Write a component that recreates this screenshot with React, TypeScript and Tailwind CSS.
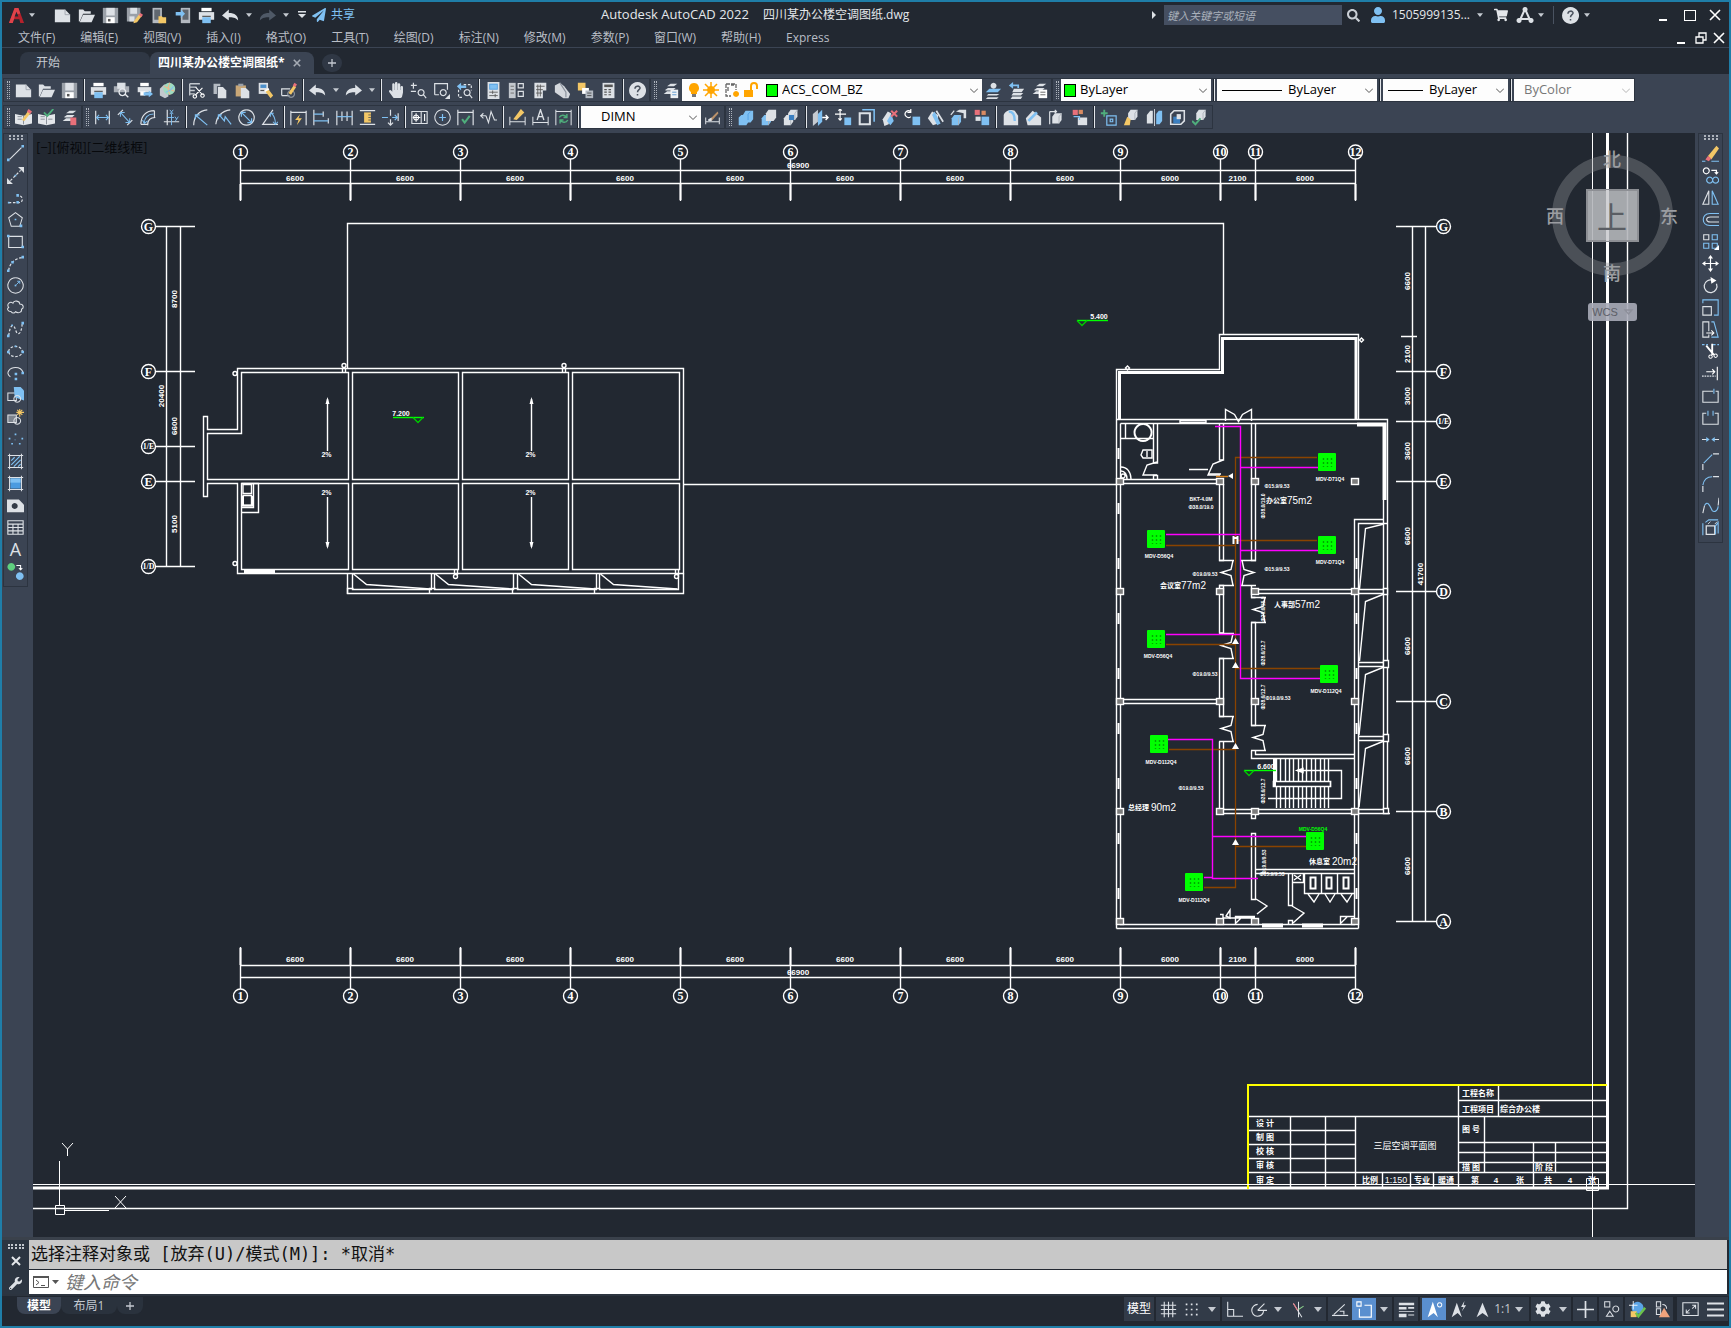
import React from 'react';
import { FaCog, FaHandPaper, FaPaperPlane, FaSearch, FaShoppingCart, FaUser, FaWrench } from 'react-icons/fa';

// Icon palette
const W = '#dde1e6';
const B = '#7fc0f2';
const Y = '#f3c766';
const R = '#e8707a';
const G = '#4fae7c';
const D = '#8b929c';

type Shape = { d: string; s?: string; f?: string; w?: number; dash?: string };

const line = (d: string, s: string = W, w: number = 1.4): Shape => ({ d, s, w });
const fill = (d: string, f: string = W): Shape => ({ d, f });
const dash = (d: string, s: string = W): Shape => ({ d, s, w: 1.4, dash: '3 2' });

const cube = (f: string = W, x = 4, y = 4): Shape[] => [
  fill(`M${x} ${y + 4}l3 -4h8v8l-3 4h-8z`, f),
  line(`M${x + 8} ${y + 12}v-8l3 -4`, '#aab0b8', 1),
];
const dimBar = (c: string = B) => [line('M2 2v16M18 2v16'), line('M3 10h14M6 7l-3 3l3 3M14 7l3 3l-3 3', c, 1.3)];
const layers = [fill('M6 5l4-3h8l-4 3z'), fill('M4 9l3-2h9l-3 3H4z'), fill('M2 14l4-3h9l-4 3z')];

const icons: Record<string, Shape[]> = {
  new: [fill('M1 3h12l6 6v9H1z'), line('M13 3v6h6', '#9ba1aa', 1)],
  open: [fill('M1 17V3h5l2 2h7v3H6L2 17z'), fill('M6 9h14l-4 9H2z')],
  save: [fill('M1 1h18v18H1z', '#9aa0a8'), fill('M5 1h10v9H5z'), fill('M5 12h10v7H5z', '#fff'), fill('M7 14h3v3H7z', '#555')],
  saveas: [fill('M1 1h16v10l-5 6H1z', '#9aa0a8'), fill('M5 1h8v7H5z'), fill('M4 11h6v6H4z'), fill('M9 17l7-9l3 2l-6 8l-4 1z', Y), fill('M15 9l2-2l3 2l-2 3z', R)],
  phoneOpen: [fill('M3 1h11v18H3z', '#b4b9c0'), fill('M5 3h7v12H5z', '#60676f'), fill('M10 11h4l1 1h4v7h-9z', Y)],
  phoneSave: [fill('M8 1h11v18H8z', '#b4b9c0'), fill('M10 3h7v12h-7z', '#60676f'), fill('M2 6h6v-3l5 5l-5 5v-3H2z', B)],
  print: [fill('M4 1h12v4H4z', '#fff'), fill('M1 6h18v9H1z'), fill('M5 12h10v7H5z', B), line('M5 11h10', '#555')],
  undo: [fill('M0 10l8-7v4c7 0 11 3 11 9c-3-4-7-4-11-4v4z')],
  redo: [fill('M20 10l-8-7v4c-7 0-11 3-11 9c3-4 7-4 11-4v4z')],
  redoOff: [fill('M20 10l-8-7v4c-7 0-11 3-11 9c3-4 7-4 11-4v4z', '#4f5967')],
  preview: [fill('M5 1h10v4h4v7H1V5h4z', '#a9aeb6'), fill('M5 1h9v7H5z'), line('M11 8a4 4 0 1 0 .1 0M14 14l4 4', '#e8ebef', 1.6)],
  publish: [fill('M5 1h10v4H5z', '#fff'), fill('M2 6h16v6H2z'), fill('M5 11h6v5H5z', '#fff'), fill('M9 12h6v-2l5 4l-5 4v-2H9z', B)],
  globe: [fill('M1 8l5-5h5v14l-4 2l-6-3z', '#c3c8ce'), fill('M12 1a7 7 0 1 0 .1 0z', '#9fdcc0'), line('M6 5c4 2 8 4 12 6M13 1c-3 4-3 10 0 14', '#f0b58a', 1.3), line('M8 12c3-1 7-3 9-7', B, 1.2)],
  cut: [line('M2 2h12M2 6h8M2 10h6M2 14h6M2 2v14', '#c3c8ce', 1.6), line('M9 6l8 9M17 7l-8 8M8 15a2 2 0 1 0 .1 0M17 14a2 2 0 1 0 .1 0', '#fff', 1.3)],
  copy: [fill('M3 2h8v3H7v9H3z', '#b4bac2'), fill('M8 6h6l4 4v9H8z')],
  paste: [fill('M2 4h12v13H2z', '#c9a777'), fill('M5 2h6v3H5z', '#9aa0a8'), fill('M8 7h6l4 4v8H8z')],
  match: [fill('M2 1h11v13H2z'), fill('M4 3h7v4H4z', '#4b8fcb'), line('M4 10h5', '#555'), fill('M9 10l4-2l6 8l-3 3z', Y), line('M9 11l5-3', '#fff', 2)],
  block: [line('M2 16V8h10M2 16h9'), line('M13 10a4 4 0 1 0 .1 0', D), fill('M10 13l6-9l3 2l-6 9z', Y), fill('M15 4l2-3l3 2l-2 3z', R)],
  zoomRt: [line('M4 1v7M1 4h7M1 11h6'), line('M13 9a3.500 3.500 0 1 0 .1 0M16 15l3 4')],
  zoomWin: [line('M2 15V2h15v7M2 15h5'), line('M12 9a3.500 3.500 0 1 0 .1 0'), fill('M20 14v6h-6z')],
  zoomPrev: [dash('M3 9v9h6M9 3h9v7'), fill('M1 5l5-4v3h6v3H6v3z', B), line('M13 9a3.500 3.500 0 1 0 .1 0M16 15l3 4')],
  props: [fill('M3 0h14v20H3z'), fill('M5 2h10v7H5z', '#4b9be0'), fill('M6 3h8v5H6z', B), line('M5 12h10M5 16h10M9 10v4M12 14v4', '#555', 1)],
  design: [fill('M1 1h8v18H1z', '#c3c8ce'), line('M3 5h4M3 9h4M3 13h4', '#666', 1), line('M12 2h6v5h-6zM12 11h6v6h-6z')],
  tools: [fill('M4 1h14v9h-4v9H4z'), line('M8 3v14M11 3v14M6 5h10M6 9h8M6 13h7', '#555', 1)],
  sheets: [fill('M1 4l6-3l5 4l7 9l-2 5h-6L1 12z', '#d4d8dd'), line('M7 1l7 11v6', '#8b929c')],
  markup: [fill('M1 1h9v6l-4 3H1z', Y), fill('M6 7h8v7H6z', '#fff'), fill('M10 10h9v9h-9z', '#b4bac2'), line('M12 13h5M12 16h5', '#444', 1)],
  calc: [fill('M3 1h14v18H3z'), fill('M5 3h10v3H5z', '#555'), dash('M5 9h10M5 12h10M5 15h10', '#555')],
  help: [fill('M10 0a10 10 0 1 0 .1 0z'), line('M7 8c0-4 6-4 6-1c0 2-3 2-3 5M10 14v2', '#4b535f', 1.8)],
  layerProp: [...layers, fill('M10 9h9v10h-9z', '#eef1f4'), line('M12 12h5M12 15h5', '#4b8fcb', 1)],
  layerCur: [fill('M5 8h14l-4 4H1z', B), fill('M4 14h13l-3 2H2z'), fill('M3 18h13l-2 2H1z'), fill('M10 1a3.500 3.500 0 1 0 .1 0z')],
  layerPrev: [fill('M7 8h12l-3 4H5z'), fill('M6 13h12l-3 3H4z'), fill('M5 17h12l-2 3H3z'), fill('M1 4l5-4v3h7v4h-2V5H6v3z', B)],
  layerState: [...layers, fill('M9 9h10v10H9z', '#fff'), line('M11 12h6M11 15h6', '#555', 1)],
  bookEdit: [fill('M0 6l10 2l10-2v11l-10 2l-10-2z', '#e3e6ea'), line('M3 9h5M3 12h5M10 8v10', '#7c838d', 1), fill('M8 13l7-10l3 2l-7 9z', Y), fill('M14 3l2-3l4 3l-2 3z', R)],
  bookCheck: [fill('M0 6l10 2l10-2v11l-10 2l-10-2z', '#e3e6ea'), line('M3 9h5M3 12h5M10 8v10M12 12h5', '#7c838d', 1), line('M7 4l4 4l7-8', G, 2.2)],
  layerRed: [...layers, fill('M11 10h7v9h-7z', R)],
  dimLin: dimBar(),
  dimAl: [line('M1 7l6-6M12 19l6-6'), line('M4 4l11 12M4 9V4h5M15 11v5h-5', B, 1.2)],
  dimArc: [line('M1 18c0-10 6-16 16-16M9 19c0-6 3-9 9-9M1 18h8M17 2v8'), line('M5 17c0-7 4-11 11-11M3 13l2 4l4-3', B, 1.2)],
  dimOrd: [line('M5 1v18M1 15h18'), line('M10 5v14M5 10h8M8 1l4 5M12 1l-4 5M14 9l2 3M18 9l-4 6', B, 1.1)],
  dimRad: [line('M2 19C2 9 8 2 18 1'), line('M4 7l14 12M4 12V7h5', B)],
  dimJog: [line('M1 18C2 9 8 2 18 1'), line('M5 7l6 7l1-5l7 9M4 12V7h4', B)],
  dimDia: [line('M10 1a9 9 0 1 0 .1 0'), line('M4 4l12 12M4 9V4h5M16 11v5h-5', B)],
  dimAng: [line('M14 1L2 18h18'), line('M12 5c4 3 5 8 5 13M11 9V5h4M14 15l3 3l3-3', B, 1.2)],
  dimQuick: [line('M1 2v17M19 2v17M1 4h18'), fill('M12 6l-6 7h4l-2 6l6-8h-4z', Y)],
  dimBase: [line('M1 1v18M12 3v6M18 11v6'), line('M1 6h11M1 14h17', B)],
  dimCont: [line('M1 2v17M7 3v11M13 3v11M19 2v17'), line('M1 9h18', B)],
  dimSpace: [line('M1 2h18M1 18h18'), fill('M6 4h8v12H6z', Y), line('M11 7h3M11 10h3M11 13h3', '#555', 1)],
  dimBreak: [line('M10 1v7M10 12v7M7 16l3 3l3-3M19 5v9'), line('M0 10h7M12 10h6M15 7l3 3l-3 3', B)],
  tol: [line('M1 3h18v14H1zM12 3v14', W, 1.3), line('M6 5v10M2 10h9M6 7a3 3 0 1 0 .1 0M16 6v8', '#fff', 1.3)],
  center: [line('M10 1a9 9 0 1 0 .1 0', W, 1.2), line('M10 6v8M6 10h8', B)],
  inspect: [line('M1 1v18M19 1v18M1 4h18'), line('M6 12l3 4l6-8', G, 2.4)],
  jogLine: [line('M0 8h7M4 5l-3 3l3 3M7 8l3 8l3-13l4 10h3', W, 1.3)],
  dimEdit: [line('M1 9v10M19 9v10M1 15h18', W, 1.2), fill('M5 12l9-12l4 4l-9 9z', Y)],
  dimText: [line('M1 9v10M19 9v10M1 16h18', W, 1.2), line('M6 13l4-12l4 12M8 9h5', W, 1.6)],
  dimUpd: [line('M1 1v18M19 1v18M1 3h18', W, 1.2), line('M5 10c2-4 7-3 9 0M14 6v4h-4M15 13c-2 4-7 3-9 0M6 17v-4h4', G, 1.7)],
  dimStyle: [line('M2 10v8M18 10v8M2 15h16', W, 1.2), fill('M7 12l9-9l1 2l-8 9z', '#b9916a'), fill('M5 12l4-2v4H5z', W)],
  union: [fill('M2 10l3-3h2l3-5h9v10l-3 4h-3l-2 3H2z', B), line('M13 13V6l3-3', '#4b9be0', 1)],
  subtract: [...cube(B, 2, 7), fill('M7 5l3-4h9v9l-3 4H7z', '#dde1e6')],
  intersect: [...cube(W, 6, 1), ...cube(W, 1, 7), fill('M7 7h6v6H7z', '#3b7fc0')],
  extrude: [fill('M1 6l6-5v14l-6 5z', '#c6cbd1'), fill('M7 6l5-5v14l-5 5z', B), line('M12 10h7M16 7l3 3l-3 3', '#fff', 1.6)],
  moveF: [line('M6 0v13M0 6h13M4 2l2-2l2 2M4 11l2 2l2-2', '#fff'), fill('M11 10h8v9h-8z', B)],
  offsetF: [line('M2 5h12v13H2z', W, 2.4), line('M5 1h14v14', B, 1.800)],
  deleteF: [fill('M2 12l6-9l4 2l-3 13l-5 2z'), fill('M7 14l5-8l3 8l-4 5z', B), line('M12 2l7 7M19 2l-7 7', R, 2.4)],
  rotateF: [line('M8 9a4 4 0 1 1 0-6M8 0v4H4', '#fff'), fill('M10 9h9v10h-9z', B)],
  taperF: [fill('M1 11l5-8l7 4v10l-6 2z', W), fill('M9 3l7 14l-4 2l-6-12z', B), line('M11 2l8 13', W, 2)],
  copyF: [...cube(B, 2, 7), fill('M7 3l4-2h8v10h-3V5z'), line('M1 7l4-5', W)],
  colorF: [fill('M2 1h6v6H2z', R), fill('M10 2h5v5h-5z', '#d98b62'), fill('M3 9h6v5H3z'), fill('M10 9h9v10h-9z', B)],
  filletE: [fill('M2 7c2-6 9-7 13-5l4 6v11H2z'), line('M8 3c6 0 7 5 7 11', B, 2.8)],
  chamferE: [fill('M1 11l8-9l10 8v9H3z'), line('M4 14l10-10', B, 3.2)],
  colorE: [...cube(W, 5, 5), line('M2 3v15M2 3h8M8 1l2 2l-2 2', W)],
  copyE: [fill('M2 1h6v6H2z', R), fill('M9 1h5v5H9z', '#d98b62'), fill('M8 10h11v9H8z'), line('M3 9h7v4', B)],
  imprint: [line('M5 1v8M1 5h8', G, 2.2), line('M8 8h11v11H8zM12 12h3v3h-3z', B)],
  clean: [...cube(W, 6, 1), fill('M1 19l4-10l4 3l-1 7z', Y)],
  separate: [fill('M1 7l4-5h3v15H1z'), line('M10 0v20', W, 1), fill('M12 6l3-4h4v12l-3 4h-4z', B)],
  shell: [line('M2 6l4-4h12v12l-4 4H2z', W, 1.8), fill('M5 9h8v8H5z', '#3b7fc0'), fill('M9 6h5v6H9z', W)],
  check: [...cube(W, 5, 1), line('M0 14l4 4l6-7', G, 2.4)],
  // draw toolbar
  line: [line('M3 17L17 3', W, 1.3), fill('M0 16h3v3H0zM17 0h3v3h-3z', B)],
  xline: [{ ...line('M4 16L16 4', W, 1.4), dash: '3 2' }, fill('M0 20v-7l7 7zM20 0v7l-7-7z'), fill('M9 9h2v2H9z', B)],
  pline: [dash('M2 16h12c6 0 5-9-1-8'), fill('M1 15h2v2H1zM11 14h3v3h-3zM11 6h3v3h-3z', B)],
  polygon: [line('M10 2l8 6l-3 10H5L2 8z', W, 1.2), fill('M9 9h2v2H9zM15 16h3v3h-3z', B)],
  rect: [line('M2 4h16v13H2z', W, 1.3), fill('M0 2h3v3H0zM17 15h3v3h-3z', B)],
  arc: [dash('M2 18c1-8 7-14 16-15'), fill('M0 17h3v3H0zM5 7h3v3H5zM17 1h3v3h-3z', B)],
  circle: [line('M10 1a9 9 0 1 0 .1 0', W, 1.2), line('M11 9l4-4M12 5h3v3', B, 1.1), fill('M9 9h2v2H9z', B)],
  cloud: [line('M5 15c-5 0-5-4-3-5c-3-4 2-8 5-5c1-4 8-3 8 1c5 0 5 5 2 6c1 4-4 5-7 3c-1 2-4 2-5 0z', W, 1.2)],
  spline: [dash('M2 17C4 2 8 4 10 10c2 8 7 7 8-8'), fill('M0 16h3v3H0zM17 1h3v3h-3zM5 4h2v2H5z', B)],
  ellipse: [dash('M2 10a8 6 0 1 1 16 0a8 6 0 1 1-16 0'), fill('M0 9h3v3H0zM17 9h3v3h-3zM9 3h2v2H9z', B)],
  ellArc: [line('M4 14c-7-5 0-11 6-11c5 0 8 3 9 6', W, 1.2), fill('M9 9h3v3H9zM17 8h3v3h-3zM9 15h3v3H9z', B)],
  insert: [line('M1 7h10v9H1z', W, 1.2), fill('M8 0h8l4 4v12l-11-4z', B), line('M12 10a4 4 0 1 0 .1 0', W, 1.2)],
  mkblock: [fill('M1 7h10v9H1z', '#7d848e'), line('M1 7h10v9H1z', W, 1.2), line('M12 10a4 4 0 1 0 .1 0', W, 1.2), line('M15 0v9M11 4h9M12 1l6 6M18 1l-6 6', Y, 1.3)],
  point: [fill('M9 3h2v2H9zM2 8h2v2H2zM17 8h2v2h-2zM5 14h2v2H5zM14 14h2v2h-2zM9 10h1v1H9z', B)],
  hatch: [line('M3 1v18M17 1v18M1 3h18M1 17h18', W, 1.2), line('M5 9l4-4M5 14l10-10M8 16l8-8M13 16l3-3', B, 1.4)],
  grad: [fill('M4 4h12v12H4z', '#4b9be0'), fill('M4 4h12v5H4z', B), line('M3 1v18M17 1v18M1 3h18M1 17h18', W, 1.2)],
  region: [fill('M0 3h14l6 6v9H0z'), fill('M9 7a3.500 3.500 0 1 0 .1 0z', '#333b47')],
  table: [line('M1 2h18v16H1zM1 6h18M1 10h18M1 14h18M7 6v12M13 6v12', W, 1.3)],
  addsel: [fill('M5 0a4.500 4.500 0 1 0 .1 0z', '#5fd07f'), fill('M15 11a4.500 4.500 0 1 0 .1 0z', B), line('M11 3h5v5M14 6l2 2l2-2', '#fff', 1.2)],
  // modify toolbar
  erase: [fill('M7 13L17 1l3 3L11 17z', Y), fill('M7 13l4 3l-3 3l-4-2z', R), line('M0 19h4M11 19h9', B, 1.2)],
  mcopy: [line('M5 1a3.500 3.500 0 1 0 .1 0M11 4h6v4M15 6l2 2l2-2', '#fff'), line('M9 12a3.500 3.500 0 1 0 .1 0M16 12a3.500 3.500 0 1 0 .1 0', B)],
  mirror: [line('M8 2v16H1z', W, 1.3), line('M12 2v16h7z', B, 1.3)],
  offset: [line('M20 3H9c-10 0-10 14 0 14h11', B, 1.3), line('M20 7H10c-6 0-6 6 0 6h10', W, 1.3)],
  array: [line('M2 2h6v6H2z', W, 1.3), line('M12 2h6v6h-6zM2 12h6v6H2zM12 12h6v6h-6z', B, 1.3), fill('M20 14v6h-6z', '#fff')],
  move: [line('M10 2v16M2 10h16', '#fff'), fill('M10 0l3 4H7zM10 20l3-4H7zM0 10l4-3v6zM20 10l-4-3v6z', '#fff')],
  rotate: [line('M13 4a7.500 7.500 0 1 0 4 4', W, 1.5), fill('M10 0l7 4l-6 4z', '#fff')],
  scale: [line('M1 9h10v10H1z', W, 1.3), line('M1 5V1h18v18h-5', B, 1.3)],
  stretch: [line('M8 12V1H1v18h7v-3', W, 1.3), line('M11 1h3l5 18h-8', B, 1.3), line('M5 14h8M11 11l3 3l-3 3', '#fff', 1.2)],
  trim: [dash('M0 2h7M13 2h7', B), line('M5 3l9 11M12 1v13', '#fff', 2.2), line('M10 14a2 2 0 1 0 .1 0M16 13a2 2 0 1 0 .1 0', '#fff', 1.2)],
  extend: [line('M18 2v16', '#fff', 1.3), line('M5 8h10M12 5l3 3l-3 3', '#fff', 1.3), { ...line('M0 13h16', W), dash: '2 1' }],
  breakPt: [line('M13 5H1v13h18V5h-3', W, 1.3), line('M14 2v6', B, 1.3)],
  breakT: [line('M5 5H1v13h18V5h-4', W, 1.3), line('M7 2v6M13 2v6', B, 1.3)],
  join: [line('M0 10h7M13 10h7', W), fill('M9 10l-4-3v6zM11 10l4-3v6z', B)],
  chamfer: [line('M1 20v-7M13 1h7', W, 1.4), line('M2 12L12 2', B, 1.3)],
  fillet: [line('M1 20v-7M13 2h7', W, 1.4), line('M1 12C2 6 6 2 12 2', B, 1.3)],
  blend: [line('M1 19l2-9M20 1l-1 9', W, 1.3), line('M3 10c4-7 7 2 9 6c3 3 7-1 7-5', B, 1.3)],
  explode: [line('M5 8h10v10H5z', W, 1.5), line('M1 5v14M4 4l4-3h11M19 17V4l-3 4v10', B, 1.3), line('M7 6l3-3M15 6l3-3', W, 1)],
  // status bar
  grid: [line('M5 1v18M10 1v18M15 1v18M1 5h18M1 10h18M1 15h18', W, 1.3)],
  dots: [fill('M2 3h2v2H2zM8 3h2v2H8zM14 3h2v2h-2zM2 9h2v2H2zM8 9h2v2H8zM14 9h2v2h-2zM2 15h2v2H2zM8 15h2v2H8zM14 15h2v2h-2z')],
  ortho: [line('M2 1v17h18M2 10h7v8', W, 1.3)],
  polar: [line('M9 4a7 7 0 1 0 7 8M9 11L17 3M9 11h11', W, 1.3)],
  iso: [line('M4 3l10 16M10 1v18', W, 1.2), line('M4 3l5 8', R, 1.2), line('M10 10l6-4', '#8bd08b', 1.2)],
  otrack: [line('M0 17h19', W), line('M2 16L15 4M9 12h5v4', W, 1.3)],
  osnap: [line('M4 9v10h14V5H10', '#fff', 1.4), line('M1 1h5v5H1z', '#fff', 1.3)],
  lwt: [fill('M1 2h18v3H1zM1 7h9v3H1zM12 7h7v2h-7zM1 12h18v1H1zM1 15h9v4H1zM12 16h7v1h-7z')],
  annoVis: [fill('M8 1l6 18l-5-5l-7 5z', '#fff'), line('M16 2a2.500 2.500 0 1 0 .1 0', '#fff', 1.2)],
  annoAuto: [fill('M8 2l6 17l-5-5l-7 5z'), fill('M17 0l-4 7h3l-2 5l5-7h-3z')],
  anno: [fill('M10 2l7 17l-7-5l-7 5z')],
  plus: [line('M10 0v20M0 10h20', W, 2)],
  shapes: [line('M2 1h6v6H2zM15 6a3.500 3.500 0 1 0 .1 0M8 12l4 6H4z', W, 1.2)],
  hw: [fill('M10 1a7 7 0 1 0 .1 0z', '#5aa4e6'), fill('M2 12h7v7H2z', Y), line('M8 14l3 4l8-10', '#6cc24a', 2.8), line('M5 0v10M0 5h10', '#fff', 1)],
  isolate: [line('M4 1h5v6H4zM4 9h5v7H4zM11 4c4 0 5 2 5 5', W, 1.2), fill('M13 8l7 11H7z', '#f0a37c')],
  full: [line('M1 2h18v15H1z', W, 1.3), line('M12 5h4v4M5 10v4h4M16 5l-4 4M5 14l4-4', W, 1.2)],
  menu: [line('M0 3h20M0 10h20M0 17h20', W, 2.4)],
};

const Icon: React.FC<{ name: string; size?: string }> = ({ name, size = 'h-[17px] w-[17px]' }) => (
  <svg viewBox="0 0 20 20" className={`${size} shrink-0`} aria-hidden="true">
    {icons[name].map((p, i) => (
      <path key={i} d={p.d} fill={p.f ?? 'none'} stroke={p.s ?? 'none'} strokeWidth={p.w} strokeDasharray={p.dash} />
    ))}
  </svg>
);

const Tool: React.FC<{ name: string }> = ({ name }) => (
  <button aria-label={name} className="flex h-[22px] w-[23px] shrink-0 items-center justify-center hover:bg-[#4d586a]">
    <Icon name={name} />
  </button>
);

const Caret: React.FC<{ wide?: boolean }> = ({ wide }) => (
  <button aria-label="more" className={`flex h-[22px] shrink-0 items-center justify-center ${wide ? 'w-4' : 'w-[13px]'}`}>
    <svg viewBox="0 0 8 5" className={wide ? 'h-[5px] w-2' : 'h-1 w-[6px]'}><path d="M0 0h8l-4 5z" fill="#c5cad1" /></svg>
  </button>
);

const Sep = () => (
  <div className="flex h-[22px] w-[6px] shrink-0 justify-center">
    <div className="w-px bg-[#1e252f]" />
    <div className="w-px bg-[#e3e6ea]" />
  </div>
);

const Grip = () => (
  <div className="flex h-[18px] w-2 shrink-0 justify-center gap-px">
    <div className="w-0 border-l border-dotted border-[#aeb4bd]" />
    <div className="w-0 border-l border-dotted border-[#aeb4bd]" />
  </div>
);

// A toolbar is a space separated list: "|" is a separator, "v" a drop-down caret
const Tools: React.FC<{ list: string }> = ({ list }) => (
  <>
    {list.split(' ').map((n, i) => {
      if (n === '|') return <Sep key={i} />;
      if (n === 'v') return <Caret key={i} />;
      if (n === 'pan') {
        return (
          <button key={i} aria-label="pan" className="flex h-[22px] w-[23px] items-center justify-center">
            <FaHandPaper className="h-4 w-4 text-[#dde1e6]" />
          </button>
        );
      }
      return <Tool key={i} name={n} />;
    })}
  </>
);

const Chevron: React.FC<{ light?: boolean }> = ({ light }) => (
  <svg viewBox="0 0 8 5" className="mr-1 h-[5px] w-2 shrink-0">
    <path d="M0 .5l4 4l4-4" fill="none" stroke={light ? '#b5b5b5' : '#555'} />
  </svg>
);

const Combo: React.FC<{ label: string; value: string; className: string; pad?: string; disabled?: boolean; children?: React.ReactNode }> = ({
  label, value, className, pad = 'pl-1', disabled, children,
}) => (
  <div className={`flex h-[22px] shrink-0 items-center bg-[#fdfdfd] ${className}`}>
    {children}
    <select
      aria-label={label}
      disabled={disabled}
      className={`h-full min-w-0 flex-1 appearance-none bg-transparent text-[13px] ${pad} ${disabled ? 'text-[#777]' : 'text-black'}`}
    >
      <option>{value}</option>
    </select>
    <Chevron light={disabled} />
  </div>
);

const group = 'flex items-center border border-[#2c3440]';

const quickAccess = ['new', 'open', 'save', 'saveas', 'phoneOpen', 'phoneSave', 'print', 'undo'];

const TitleBar = () => (
  <header className="flex h-[26px] items-center bg-[#222831] text-xs text-[#e4e7eb]">
    <div className="flex w-[591px] shrink-0 items-center pl-1">
      <button aria-label="Application menu" className="flex w-11 items-center pl-[2px]">
        <svg viewBox="0 0 18 18" className="h-[17px] w-[17px]">
          <path d="M7 1h4l6 16h-4l-1-4H6l-1 4H1z" fill="#b5222c" />
          <path d="M7 1h4l2 6l-5 1l-3 9H1z" fill="#e0434a" />
          <path d="M9 5l2 5H7z" fill="#222831" />
        </svg>
        <Caret />
      </button>
      {quickAccess.map((n) => (
        <button key={n} aria-label={n} className="flex w-6 items-center justify-center"><Icon name={n} /></button>
      ))}
      <Caret />
      <button aria-label="redo" className="flex w-6 items-center justify-center"><Icon name="redoOff" /></button>
      <Caret />
      <button aria-label="customize" className="flex w-5 items-center justify-center">
        <svg viewBox="0 0 10 8" className="h-2 w-[10px]"><path d="M1 0h8v1.500H1zM1 3h8l-4 4z" fill={W} /></svg>
      </button>
      <button className="flex items-center gap-[5px] text-[#7fc0f2]"><FaPaperPlane className="h-[14px] w-[14px]" />共享</button>
    </div>
    <h1 className="flex flex-1 items-center gap-[14px] whitespace-pre pl-2 text-xs"><span className="text-[13px]">Autodesk AutoCAD 2022</span><span>四川某办公楼空调图纸.dwg</span></h1>
    <svg viewBox="0 0 4 8" className="mr-2 h-2 w-1"><path d="M0 0v8l4-4z" fill={W} /></svg>
    <input aria-label="search" placeholder="键入关键字或短语" className="h-5 w-[178px] bg-[#454f61] px-[3px] text-[11px] italic placeholder:text-[#aab1bb]" />
    <button aria-label="find" className="flex w-6 justify-center"><FaSearch className="h-[13px] w-[13px] text-[#c9ced5]" /></button>
    <button className="flex items-center gap-[6px] pr-[3px] text-xs"><FaUser className="ml-1 h-4 w-4 text-[#7fc0f2]" />1505999135...</button>
    <Caret />
    <button aria-label="cart" className="flex w-[30px] justify-center"><FaShoppingCart className="h-[14px] w-[14px]" /></button>
    <button aria-label="apps" className="flex w-[18px] justify-center">
      <svg viewBox="0 0 18 16" className="h-4 w-[18px]"><path d="M9 2L4 13M9 2l5 11M3 12h12" stroke={W} strokeWidth="2" fill="none" /><path d="M9 0a2.500 2.500 0 1 0 .1 0zM3 11a2.500 2.500 0 1 0 .1 0zM15 11a2.500 2.500 0 1 0 .1 0z" fill={W} /></svg>
    </button>
    <Caret />
    <div className="mx-[6px] h-[18px] w-px bg-[#4a5361]" />
    <button aria-label="help" className="flex w-5 justify-center"><Icon name="help" /></button>
    <Caret />
    <div className="ml-[66px] flex items-center gap-[13px] pr-2">
      <button aria-label="minimize" className="flex h-3 w-3 items-end"><span className="h-[2px] w-2 bg-white" /></button>
      <button aria-label="maximize" className="h-[11px] w-3 border border-white" />
      <button aria-label="close"><svg viewBox="0 0 12 12" className="h-3 w-3"><path d="M1 1l10 10M11 1L1 11" stroke="#fff" strokeWidth="1.6" /></svg></button>
    </div>
  </header>
);

const menus = ['文件(F)', '编辑(E)', '视图(V)', '插入(I)', '格式(O)', '工具(T)', '绘图(D)', '标注(N)', '修改(M)', '参数(P)', '窗口(W)', '帮助(H)', 'Express'];

const MenuBar = () => (
  <nav className="flex h-5 items-center border-b border-[#3b4453] bg-[#222831] pl-4 text-xs text-[#b9bec6]">
    {menus.map((m) => (
      <button key={m} className="mr-[25px] whitespace-nowrap">{m}</button>
    ))}
    <div className="ml-auto flex items-center gap-[6px] pr-1">
      <button aria-label="minimize drawing" className="flex h-3 w-3 items-end"><span className="h-[2px] w-2 bg-white" /></button>
      <button aria-label="restore drawing"><svg viewBox="0 0 12 12" className="h-3 w-3"><path d="M1 5h7v6H1zM4 5V1h7v7H8" fill="none" stroke="#fff" strokeWidth="1.3" /></svg></button>
      <button aria-label="close drawing"><svg viewBox="0 0 12 12" className="h-3 w-3"><path d="M1 1l10 10M11 1L1 11" stroke="#fff" strokeWidth="1.6" /></svg></button>
    </div>
  </nav>
);

const FileTabs = () => (
  <div className="flex h-[26px] items-end bg-[#222831] pl-[18px] text-xs">
    <button className="h-[22px] w-[130px] rounded-t-lg bg-[#2f3744] pl-4 text-left text-[#c3c8cf]">开始</button>
    <div className="flex h-[22px] w-[164px] items-center gap-2 rounded-t-lg bg-[#3b4453] pl-2 font-bold text-white">
      <button className="whitespace-nowrap">四川某办公楼空调图纸*</button>
      <button aria-label="close tab"><svg viewBox="0 0 10 10" className="h-2 w-2"><path d="M1 1l8 8M9 1L1 9" stroke="#a5abb4" strokeWidth="2" /></svg></button>
    </div>
    <button aria-label="new tab" className="mb-[2px] ml-2 flex h-[18px] w-5 items-center justify-center rounded-full bg-[#2f3744]">
      <svg viewBox="0 0 10 10" className="h-2 w-2"><path d="M5 0v10M0 5h10" stroke="#c3c8cf" strokeWidth="1.600" /></svg>
    </button>
  </div>
);

const green = <span className="h-[13px] w-3 shrink-0 border border-black bg-[#00ff00]" />;

const Toolbars = () => (
  <div className="flex flex-col gap-[3px] bg-[#3b4453] py-1 pl-px">
    <div className="flex h-6 items-center">
      <div className={group}>
        <Grip />
        <Tools list="new open save | print preview publish globe | cut copy paste match block | undo v redo v | pan zoomRt zoomWin zoomPrev | props design tools sheets markup calc | help" />
      </div>
      <div className={group}>
        <Grip />
        <Tools list="layerProp" />
        <Combo label="layer" value="ACS_COM_BZ" className="w-[300px]">
          <svg viewBox="0 0 76 20" className="ml-1 mr-1 h-5 w-[76px] shrink-0">
            <path d="M8 3a5 5 0 0 0-3 9v2h6v-2a5 5 0 0 0-3-9z" fill="#ffa500" /><path d="M6 14h4v3H6z" fill="#777" />
            <path d="M25 6a4 4 0 1 0 .1 0z" fill="#ffa500" /><path d="M25 2v16M17 10h16M19 4l12 12M31 4L19 16" stroke="#ffa500" strokeWidth="1.500" />
            <path d="M40 4h10v6M40 4v12h5M42 7v5M45 5h3" fill="none" stroke="#666" strokeWidth="1.300" strokeDasharray="4 1" />
            <path d="M50 11a3 3 0 1 0 .1 0z" fill="#ffa500" />
            <path d="M58 10h9v7h-9z" fill="#ffa500" /><path d="M65 10V6a3 3 0 0 1 6 0v3" fill="none" stroke="#ffa500" strokeWidth="2" />
          </svg>
          {green}
        </Combo>
        <Tools list="layerCur layerPrev layerState" />
      </div>
      <div className={group}>
        <Grip />
        <Combo label="color" value="ByLayer" className="w-[150px] pl-[3px]">{green}</Combo>
        <Sep />
        <Combo label="linetype" value="ByLayer" className="w-[160px] pl-[5px]" pad="pl-[6px]"><span className="h-px w-[60px] bg-black" /></Combo>
        <Sep />
        <Combo label="lineweight" value="ByLayer" className="w-[125px] pl-[5px]" pad="pl-[6px]"><span className="h-px w-[35px] bg-black" /></Combo>
        <Sep />
        <Combo label="plot style" value="ByColor" className="w-[120px]" pad="pl-[10px]" disabled />
      </div>
    </div>
    <div className="flex h-6 items-center">
      <div className={group}>
        <Grip />
        <Tools list="bookEdit bookCheck layerRed" />
      </div>
      <div className={group}>
        <Grip />
        <Tools list="dimLin dimAl dimArc dimOrd | dimRad dimJog dimDia dimAng | dimQuick dimBase dimCont dimSpace dimBreak | tol center inspect jogLine | dimEdit dimText dimUpd |" />
        <Combo label="dimension style" value="DIMN" className="w-[120px]" pad="pl-5" />
        <Tools list="dimStyle" />
      </div>
      <div className={group}>
        <Grip />
        <Tools list="union subtract intersect | extrude moveF offsetF deleteF rotateF taperF copyF colorF | filletE chamferE colorE copyE | imprint clean separate shell check" />
      </div>
    </div>
  </div>
);

const drawTools = ['line', 'xline', 'pline', 'polygon', 'rect', 'arc', 'circle', 'cloud', 'spline', 'ellipse', 'ellArc', 'insert', 'mkblock', 'point', 'hatch', 'grad', 'region', 'table', 'mtext', 'addsel'];
const modifyTools = ['erase', 'mcopy', 'mirror', 'offset', 'array', 'move', 'rotate', 'scale', 'stretch', 'trim', 'extend', 'breakPt', 'breakT', 'join', 'chamfer', 'fillet', 'blend', 'explode'];

const SideBar: React.FC<{ tools: string[] }> = ({ tools }) => (
  <div className="flex w-[25px] flex-col items-center border border-[#2c3440] pt-px pb-1">
    <div className="mb-[2px] h-[5px] w-[14px] border-y-2 border-dotted border-[#aeb4bd]" />
    {tools.map((t) =>
      t === 'mtext' ? (
        <button key={t} aria-label={t} className="h-[22px] text-lg leading-[22px] text-[#dde1e6]">A</button>
      ) : (
        <Tool key={t} name={t} />
      ),
    )}
  </div>
);

// ---- drawing ----

const CAD = '"Liberation Sans", "Noto Sans CJK SC", sans-serif';

const T: React.FC<{ x: number; y: number; s?: number; v?: boolean; c?: string; start?: boolean; b?: boolean; children: React.ReactNode }> = ({
  x, y, s = 8, v, c = '#fff', start, b, children,
}) => (
  <text
    x={x} y={y} fontSize={s} fill={c} fontFamily={CAD} fontWeight={b ? 700 : 400} stroke="none"
    textAnchor={start ? 'start' : 'middle'} dominantBaseline="central" transform={v ? `rotate(-90 ${x} ${y})` : undefined}
  >
    {children}
  </text>
);

const Bubble: React.FC<{ x: number; y: number; t: string }> = ({ x, y, t }) => (
  <>
    <circle cx={x} cy={y} r="7" />
    <text x={x} y={y} fontSize={t.length > 2 ? 8 : 12} fill="#fff" stroke="none" fontFamily="Liberation Serif, serif" fontWeight="700" textAnchor="middle" dominantBaseline="central">{t}</text>
  </>
);

const axes: [number, string][] = [
  [240, '1'], [350, '2'], [460, '3'], [570, '4'], [680, '5'], [790, '6'], [900, '7'], [1010, '8'], [1120, '9'], [1220, '10'], [1255, '11'], [1355, '12'],
];
const spans = axes.slice(1).map(([x], i) => {
  const w = x - axes[i][0];
  return { mid: (x + axes[i][0]) / 2, t: w === 110 ? '6600' : w === 100 ? '6000' : '2100' };
});

const Grid = () => (
  <g>
    <path d="M240.500 170.500H1355.500M240.500 183.500H1355.500M240.500 965.500H1355.500M240.500 977.500H1355.500" />
    {axes.map(([x, t]) => (
      <g key={t}>
        <path d={`M${x + 0.5} 159V201M${x + 0.5} 947V989`} />
        <path d={`M${x + 0.5} 184V200M${x + 0.5} 948V965`} strokeWidth="2" />
        <Bubble x={x + 0.5} y={152} t={t} />
        <Bubble x={x + 0.5} y={996} t={t} />
      </g>
    ))}
    {spans.map((p) => (
      <g key={p.mid}>
        <T x={p.mid} y={178} b>{p.t}</T>
        <T x={p.mid} y={959} b>{p.t}</T>
      </g>
    ))}
    <T x={798} y={165} b>66900</T>
    <T x={798} y={972} b>66900</T>

    <path d="M166.500 226.500V566.500M180.500 226.500V566.500M1412.500 226.500V921.500M1425.500 226.500V921.500M1401 336.500H1417" />
    {[[226, 'G'], [371, 'F'], [446, '1/E'], [481, 'E'], [566, '1/D']].map(([y, t]) => (
      <g key={t}><path d={`M156 ${+y + 0.5}H195`} /><Bubble x={148.5} y={+y + 0.5} t={t as string} /></g>
    ))}
    {[[226, 'G'], [371, 'F'], [421, '1/E'], [481, 'E'], [591, 'D'], [701, 'C'], [811, 'B'], [921, 'A']].map(([y, t]) => (
      <g key={t}><path d={`M1396 ${+y + 0.5}H1437`} /><Bubble x={1443.5} y={+y + 0.5} t={t as string} /></g>
    ))}
    {([[174, 299, '8700'], [174, 426, '6600'], [174, 524, '5100'], [161, 396, '20400'], [1407, 281, '6600'], [1407, 354, '2100'], [1407, 396, '3000'], [1407, 451, '3600'], [1407, 536, '6600'], [1407, 646, '6600'], [1407, 756, '6600'], [1407, 866, '6600'], [1420, 574, '41700']] as [number, number, string][]).map(([x, y, t]) => (
      <T key={`${x}-${y}`} x={x} y={y} v b>{t}</T>
    ))}
  </g>
);

const Level: React.FC<{ x: number; y: number; w: number; tri: number; t: string; tx: number }> = ({ x, y, w, tri, t, tx }) => (
  <>
    <path d={`M${x} ${y}h${w}`} stroke="#00ff00" />
    <path d={`M${tri - 5} ${y}l5 5l5 -5`} stroke="#00c800" />
    <T x={tx} y={y - 4} s={7} b>{t}</T>
  </>
);

const LeftWing = () => (
  <g>
    <path d="M347.500 368V223.500H1223.500V335M683.500 484.500H1116" />
    <path d="M237.500 368.500H683.500V573.500H237.500V483.500H207.500V496.500H203.500V416.500H207.500V429.500H237.500Z" />
    <path d="M348.500 372.500H241.500V433.500H207.500V479.500H348.500ZM352.500 372.500H458.500V479.500H352.500ZM462.500 372.500H568.500V479.500H462.500ZM572.500 372.500H679.500V479.500H572.500Z" />
    <path d="M241.500 483.500H348.500V569.500H241.500ZM352.500 483.500H458.500V569.500H352.500ZM462.500 483.500H568.500V569.500H462.500ZM572.500 483.500H679.500V569.500H572.500Z" />
    <path d="M347.500 573.500V593.500H683.500V573.500" />
    {[352.5, 434.5, 517.5, 599.5].map((x) => (
      <g key={x}>
        <path d={`M${x} 573.500V589.500H${x + 79}V573.500`} />
        <path d={`M${x + 1} 574L${x + 14} 584.500L${x + 78} 589`} />
        <path d={`M${x - 5} 594V588.500h6`} />
      </g>
    ))}
    <path d="M244 571.500H275" strokeWidth="3" />
    <path d="M241.500 483.500H258.500V512.500H241.500M253.500 484V507.500H241.500M243 484.500H251.500V493.500H243ZM243 495.500H251.500V505.500H243Z" />
    <path d="M243 496V505.500H252V496" strokeWidth="2" />
    {[327.5, 531.5].map((x) => (
      <g key={x}>
        <path d={`M${x} 399V451M${x} 497V547`} />
        <path d={`M${x} 397l2 7h-4zM${x} 549l2 -7h-4z`} fill="#fff" stroke="none" />
        <T x={x - 1} y={454} s={7} b>2%</T>
        <T x={x - 1} y={492} s={7} b>2%</T>
      </g>
    ))}
    {[[344, 365.5], [564, 365.5], [235, 373.5], [235, 563.5], [455.5, 576.5], [676.5, 576.5]].map(([x, y]) => (
      <circle key={`${x}-${y}`} cx={x} cy={y} r="2" />
    ))}
    <path d="M342.500 368v4M345.500 368v4M562.500 368v4M565.500 368v4M454.500 569v6M457.500 569v6M675.500 569v6M678.500 569v6M1127.500 366l2 2l-2 2l-2-2zM1361.500 338l2 2l-2 2l-2-2z" />
    <Level x={393} y={417.5} w={31} tri={418} t="7.200" tx={401} />
    <Level x={1077} y={320.5} w={31} tri={1082} t="5.400" tx={1099} />
  </g>
);

const units: [number, number][] = [[1327, 462], [1327, 545], [1156, 539], [1156, 639], [1329, 674], [1159, 744], [1315, 841], [1194, 882]];
const unitLabels: [number, number, string][] = [
  [1330, 479, 'MDV-D71Q4'], [1330, 562, 'MDV-D71Q4'], [1159, 556, 'MDV-D56Q4'], [1158, 656, 'MDV-D56Q4'], [1326, 691, 'MDV-D112Q4'], [1161, 762, 'MDV-D112Q4'], [1194, 900, 'MDV-D112Q4'],
  [1277, 486, 'Φ15.9/9.53'], [1277, 569, 'Φ15.9/9.53'], [1205, 574, 'Φ19.0/9.53'], [1205, 674, 'Φ19.0/9.53'], [1278, 698, 'Φ19.0/9.53'], [1191, 788, 'Φ19.0/9.53'], [1272, 874, 'Φ15.9/9.53'], [1201, 499, 'BKT-4.0M'], [1201, 507, 'Φ38.0/19.0'],
];
const riserLabels: [number, number, string][] = [
  [1263, 506, 'Φ38.0/19.0'], [1263, 609, 'Φ28.6/15.9'], [1263, 653, 'Φ28.6/12.7'], [1263, 697, 'Φ28.6/12.7'], [1263, 791, 'Φ28.6/12.7'], [1264, 862, 'Φ19.0/9.53'],
];

// double door leaf pair, opening towards d
const door = (x: number, y: number, d: number) =>
  `M${x} ${y}h${15 * d}M${x + 14 * d} ${y}l${-2 * d} 9l${-10 * d} 3l${10 * d} 3l${2 * d} 10M${x} ${y + 25}h${15 * d}`;

const RightWing = () => (
  <g>
    <path d="M1116.500 928.500V369.500H1219.500V334.500H1358.500V419.500" />
    <path d="M1119.500 419V372.500H1222.500V338.500H1356V419" strokeWidth="3" />
    <path d="M1116.500 419.500H1387.500V809.500M1120.500 423.500H1357M1383.500 500V809M1120.500 423.500V924.500H1354.500V519.500H1383.500M1358.500 928.500V523.500H1387M1116.500 928.500H1358.500" />
    <path d="M1357 424.500H1384.500V500" strokeWidth="4" />
    <path d="M1219.500 423.500V460H1223.500V423.500M1219.500 484V560.500H1223.500V484M1219.500 585.500V633H1223.500V585.500ZM1219.500 658.500V716.500H1223.500V658.500ZM1219.500 741.500V809M1223.500 741.500V809.500" />
    <path d="M1251.500 423.500V560.500H1255.500V423.500M1251.500 585.500V597.500H1255.500M1251.500 622.500V725.500H1255.500V622.500ZM1251.500 750.500V758.500H1354M1255.500 750.500V754.500H1354M1251.500 814V818.500H1255.500V814M1251.500 833.500V899.500H1255.500V833.500Z" />
    <path d="M1120.500 479.500H1217M1120.500 483.500H1217M1258 589.500H1383M1258 593.500H1383M1123 699.500H1217M1123 703.500H1217M1223 809.500H1387M1223 813.500H1390M1358.500 662.500H1383M1358.500 666.500H1383M1358.500 736.500H1383M1358.500 740.500H1383" />
    <path d="M1383.500 660.500h5v7h-5zM1383.500 734.500h5v7h-5zM1383.500 808.500h5v5h-5zM1383.500 588.500h4v6h-4z" fill="#222831" />
    <path d={[door(1219, 560.5, 1), door(1256, 560.5, -1), door(1219, 633.5, 1), door(1219, 716.5, 1), door(1251, 597.5, 1), door(1251, 725.5, 1)].join('')} />
    <path d="M1225.500 421V409.500l9 5l4 7l4 -7l9 -5V421" />
    <path d="M1384 524L1365.500 528.500L1359.500 589M1384 594L1365.500 601.500L1359.500 661M1384 667L1365.500 674.500L1359 735M1384 741L1365.500 748.500L1359 807" />

    {/* pantry and toilet by the entrance */}
    <path d="M1153.500 423.500V463H1157.500V423.500M1120.500 438.500H1153M1125.500 424V438M1153.500 479V475.500H1157.500V479M1180 420.500H1206V422.500H1180Z" />
    <path d="M1143 424a8.500 8.500 0 1 0 .1 0" strokeWidth="2" />
    <path d="M1141 455l2-5h9v8h-9zM1147 451v6M1121 467c6 0 10 5 10 12M1121 471c4 0 6 4 6 8M1123 474a2 2 0 1 0 .1 0M1157 462l-10 3l-4 10h14M1223 460l-10 4l-5 11h12" />
    <path d="M1189 469.500H1208M1208 474H1221" />

    {/* stairs */}
    {Array.from({ length: 13 }, (_, i) => 1276 + Math.round(i * 4.35)).map((x) => (
      <path key={x} d={`M${x + 0.5} 759V808`} />
    ))}
    <path d="M1273.500 781.500H1330.500V786.500H1273.500Z" fill="#222831" strokeWidth="1.700" />
    <path d="M1274.500 759V786" strokeWidth="3" />
    <path d="M1268 798.500H1341.500V770.500H1297" />
    <path d="M1297 770.500l6-2v4z" fill="#fff" />

    {/* washroom */}
    <path d="M1255.500 869.500H1354.500M1255.500 873.500H1354.500M1288.500 873.500V905.500H1292.500V873.500M1288.500 924V920.500H1292.500V924M1292.500 882.500H1303.500V873.500M1304.500 873.500V893.500H1354.500M1321.500 873.500V893.500M1337.500 873.500V893.500" />
    <path d="M1310.500 877.500h5v11h-5zM1326.500 877.500h5v11h-5zM1343.500 877.500h5v11h-5z" strokeWidth="2" />
    <path d="M1308 894l6 8l5-8M1325 894l5 8l5-8M1341 894l6 8l5-8M1256 899l11 7l-10 8M1292 906l12 7l-11 10M1294 875l7 5M1301 875l-7 5M1230 918l-4-2l4-6z" />
    <path d="M1235.500 924V916.500H1255M1236 923l6-6M1340.500 924V916.500H1354M1341 923l6-6M1220 914.500H1223V918H1255" />
    <path d="M1262 925.500H1283M1302 925.500H1323" strokeWidth="4" />

    {[448, 503, 558, 613, 668, 723, 778, 833, 888].map((y) => (
      <g key={y}>
        <path d={`M1118.500 ${y}v11`} strokeWidth="2" />
        {y > 540 && <path d={`M1356.500 ${y}v11`} strokeWidth="2" />}
      </g>
    ))}
    {[481, 591, 701, 811, 921].map((y) =>
      [1120, 1220, 1255, 1355].map((x) => <rect key={`${x}-${y}`} x={x - 3.5} y={y - 2.5} width="7" height="6" fill="#7d7d7d" />),
    )}

    {/* condensate and refrigerant pipes */}
    <path d="M1317 457.500H1235.500V887.500H1204M1235 540.500H1317M1235 545.500H1166M1235 644.500H1166M1235 668.500H1320M1235 749.500H1169M1235 846.500H1306" stroke="#8a4300" strokeWidth="1.300" />
    <path d="M1216 476.500H1228" stroke="#d98218" />
    <path d="M1215 426.500H1240.500V678.500H1320M1240 467.500H1318M1240 550.500H1318M1240 534.500H1166M1240 634.500H1166M1168 739.500H1212.500V878.500H1258M1212 836.500H1306M1204 877.500H1212" stroke="#ff00ff" />
    <path d="M1228 476l5-3v6zM1232 644l3.500-6l3.500 6zM1232 668l3.500-6l3.500 6zM1232 749l3.500-6l3.500 6zM1232 845l3.500-6l3.500 6z" fill="#fff" stroke="none" />
    <path d="M1233.500 536v8M1237.500 536v8M1233 538h5" strokeWidth="2" />

    {units.map(([x, y]) => (
      <g key={`${x}-${y}`}>
        <rect x={x - 9} y={y - 9} width="18" height="18" rx="1" fill="#00ff00" stroke="none" />
        <path d={`M${x - 3.500} ${y - 4}v9M${x + 0.500} ${y - 4}v9M${x + 4.500} ${y - 4}v9`} stroke="#00a800" strokeDasharray="2 2" />
      </g>
    ))}
    {unitLabels.map(([x, y, t]) => <T key={`${x}-${y}`} x={x} y={y} s={5} b>{t}</T>)}
    {riserLabels.map(([x, y, t]) => <T key={`${x}-${y}`} x={x} y={y} s={5} v b>{t}</T>)}
    <T x={1313} y={829} s={5} c="#00ff00" b>MDV-D56Q4</T>

    {([[1267, 500, '办公室', '75m2'], [1161, 585, '会议室', '77m2'], [1275, 604, '人事部', '57m2'], [1129, 807, '总经理', '90m2'], [1310, 861, '休息室', '20m2']] as [number, number, string, string][]).map(([x, y, a, b]) => (
      <g key={a}>
        <T x={x - 1} y={y} s={7} start b>{a}</T>
        <T x={x + (y > 700 ? 22 : 20)} y={y} s={10} start>{b}</T>
      </g>
    ))}
    <Level x={1244} y={770.5} w={32} tri={1249} t="6.600" tx={1266} />
  </g>
);

const titleTexts: [number, number, string, number?][] = [
  [1478, 1093, '工程名称'], [1478, 1109, '工程项目'], [1520, 1109, '综合办公楼'],
  [1265, 1123, '设 计'], [1265, 1137, '制 图'], [1265, 1151, '校 核'], [1265, 1165, '审 核'], [1265, 1180, '审 定'],
  [1405, 1146, '三层空调平面图', 9], [1471, 1129, '图 号'], [1471, 1167, '描 图'], [1544, 1167, '阶 段'],
  [1370, 1180, '比例'], [1396, 1180, '1:150', 9], [1422, 1180, '专业'], [1446, 1180, '暖通'],
  [1475, 1180, '第'], [1496, 1180, '4'], [1520, 1180, '张'], [1548, 1180, '共'], [1570, 1180, '4'], [1592, 1180, '张'],
];

const TitleBlock = () => (
  <g>
    <path d="M1248 1116.500H1607M1458.500 1085V1188M1458 1100.500H1607M1498.500 1085V1116M1248 1130.500H1355M1248 1144.500H1355M1248 1158.500H1355M1248 1172.500H1607M1290.500 1116V1188M1325.500 1116V1188M1355.500 1116V1188M1484.500 1116V1172M1458 1142.500H1607M1458 1152.500H1607M1458 1162.500H1607M1533.500 1142V1188M1555.500 1142V1172M1382.500 1172V1188M1410.500 1172V1188M1433.500 1172V1188" />
    {titleTexts.map(([x, y, t, s]) => <T key={`${x}-${y}`} x={x} y={y} s={s ?? 8} b={!s}>{t}</T>)}
    <path d="M33 1188H1607.500V133" strokeWidth="3" />
    <path d="M33 1208.500H1627.500V133" />
    <path d="M1248 1189V1085H1607" stroke="#ffff00" strokeWidth="2" />
  </g>
);

const ViewCube = () => (
  <g stroke="none" fontFamily='"Noto Sans CJK SC", sans-serif' textAnchor="middle">
    <circle cx="1612.500" cy="215.500" r="54" fill="none" stroke="#8a8c92" strokeOpacity="0.4" strokeWidth="13" />
    <rect x="1587" y="190" width="51" height="51" fill="#b4b6ba" fillOpacity="0.9" stroke="#8d8f94" strokeWidth="2" />
    <path d="M1607.500 190V241" stroke="#d0d1d4" strokeWidth="3" />
    <text x="1612" y="215" fontSize="30" fill="#5a5d63" dominantBaseline="central">上</text>
    <g fontSize="18" fontWeight="500" fill="#9b9da1">
      <text x="1612" y="166">北</text>
      <text x="1612" y="280">南</text>
      <text x="1555" y="223">西</text>
      <text x="1669" y="223">东</text>
    </g>
    <rect x="1588" y="303" width="49" height="18" rx="3" fill="#a9abb8" fillOpacity="0.9" />
    <text x="1605" y="316" fontSize="11" fill="#5d5f68" fontFamily="Liberation Sans, sans-serif">WCS</text>
    <path d="M1625 310h7l-3.500 4z" fill="none" stroke="#8d8f9a" />
  </g>
);

const Canvas = () => (
  <svg viewBox="33 133 1662 1104" preserveAspectRatio="xMinYMin slice" className="h-full min-h-0 w-full min-w-0 flex-1 bg-[#222831]" fill="none" stroke="#fff" strokeWidth="1.400">
    <text x="36" y="152" fontSize="13" fill="#07090c" stroke="none" fontFamily='"Noto Sans CJK SC", sans-serif'>[−][俯视][二维线框]</text>
    <Grid />
    <LeftWing />
    <RightWing />
    <TitleBlock />
    <path d="M33 1184.500H1695M1592.500 133V1237M1586.500 1178.500H1598.500V1190.500H1586.500Z" strokeWidth="1" />
    <path d="M59.500 1161V1205M64 1210.500H109M55.500 1205.500H64.500V1214.500H55.500Z" strokeWidth="1" />
    <path d="M62 1143l5.500 6l5.500-6M67.500 1149v7M115 1196l11 12M126 1196l-11 12" strokeWidth="1" />
    <ViewCube />
  </svg>
);

const CommandLine = () => (
  <section className="flex border-b-2 border-b-[#2c343f] border-t-[3px] border-t-[#3a414b] bg-[#222831]">
    <div className="flex w-[27px] shrink-0 flex-col items-center gap-[7px] bg-[#2c3541] pt-1">
      <div className="h-[5px] w-4 border-y-2 border-dotted border-[#c3c8cf]" />
      <button aria-label="close command line"><svg viewBox="0 0 10 10" className="h-[10px] w-[10px]"><path d="M1 1l8 8M9 1L1 9" stroke="#e4e7eb" strokeWidth="2" /></svg></button>
      <button aria-label="command settings" className="pt-1"><FaWrench className="h-[13px] w-[13px] text-[#dde1e6]" /></button>
    </div>
    <div className="mr-[2px] flex-1">
      <p className="h-[29px] bg-[#c8c8c8] pl-[2px] font-['DejaVu_Sans_Mono','Noto_Sans_CJK_SC',monospace] text-[17px] leading-[29px] text-[#111]">选择注释对象或 [放弃(U)/模式(M)]: *取消*</p>
      <div className="mt-px flex h-6 items-center bg-white">
        <svg viewBox="0 0 28 14" className="ml-1 h-[14px] w-7">
          <path d="M.5 1.500h15v11H.5z" fill="none" stroke="#555" /><path d="M0 1h16v2H0z" fill="#555" />
          <path d="M3 5l3 2.500l-3 2.500M8 10.500h4" fill="none" stroke="#555" /><path d="M19 5h7l-3.500 4z" fill="#555" />
        </svg>
        <input aria-label="command" placeholder="键入命令" className="h-6 flex-1 pl-1 text-lg leading-6 italic placeholder:text-[#777]" />
      </div>
    </div>
  </section>
);

const Stat: React.FC<{ name: string; on?: boolean }> = ({ name, on }) => (
  <button aria-label={name} className={`flex h-[22px] w-6 shrink-0 items-center justify-center ${on ? 'bg-[#5a8fcf]' : ''}`}>
    <Icon name={name} />
  </button>
);

const box = 'flex h-6 shrink-0 items-center bg-[#323b48]';

const StatusBar = () => (
  <footer className="flex h-[30px] items-start bg-[#222831] pt-px text-xs text-[#c3c8cf]">
    <div className="flex h-[17px] items-center pl-[15px]">
      <button className="h-[17px] w-11 rounded-b-lg bg-[#3b4453] font-bold leading-[17px] text-white">模型</button>
      <button className="h-[17px] w-[56px] rounded-b-lg bg-[#2a323d] leading-[17px]">布局1</button>
      <button aria-label="new layout" className="flex h-[17px] w-[26px] items-center justify-center rounded-b-lg bg-[#2a323d]">
        <svg viewBox="0 0 10 10" className="h-2 w-2"><path d="M5 0v10M0 5h10" stroke="#c3c8cf" strokeWidth="1.600" /></svg>
      </button>
    </div>
    <div className="ml-auto flex gap-[2px] pr-px">
      <button className={`${box} w-[30px] justify-center text-white`}>模型</button>
      <div className={box}><Stat name="grid" /><Stat name="dots" /><Caret wide /></div>
      <div className={box}><Stat name="ortho" /><Stat name="polar" /><Caret wide /><Stat name="iso" /><Caret wide /></div>
      <div className={box}><Stat name="otrack" /><Stat name="osnap" on /><Caret wide /></div>
      <div className={box}><Stat name="lwt" /></div>
      <div className={`${box} px-[2px]`}>
        <Stat name="annoVis" on /><Stat name="annoAuto" /><Stat name="anno" />
        <button>1:1</button><Caret wide />
      </div>
      <div className={box}>
        <button aria-label="workspace" className="flex w-6 justify-center"><FaCog className="h-4 w-4 text-[#dde1e6]" /></button>
        <Caret wide />
      </div>
      <div className={box}><Stat name="plus" /></div>
      <div className={box}><Stat name="shapes" /></div>
      <div className={`${box} mr-[2px]`}><Stat name="hw" /><Stat name="isolate" /></div>
      <div className={`${box} gap-px px-px`}><Stat name="full" /><Stat name="menu" /></div>
    </div>
  </footer>
);

const App: React.FC = () => (
  <div className="flex h-screen flex-col overflow-hidden border-2 border-[#1f7ea8] bg-[#222831] font-['Open_Sans','Noto_Sans_CJK_SC',sans-serif]">
    <TitleBar />
    <MenuBar />
    <FileTabs />
    <Toolbars />
    <main className="flex min-h-0 flex-1 items-stretch bg-[#3b4453]">
      <div className="w-[31px] shrink-0 pl-px"><SideBar tools={drawTools} /></div>
      <Canvas />
      <div className="w-[34px] shrink-0 pl-[3px]"><SideBar tools={modifyTools} /></div>
    </main>
    <CommandLine />
    <StatusBar />
  </div>
);

export default App;
